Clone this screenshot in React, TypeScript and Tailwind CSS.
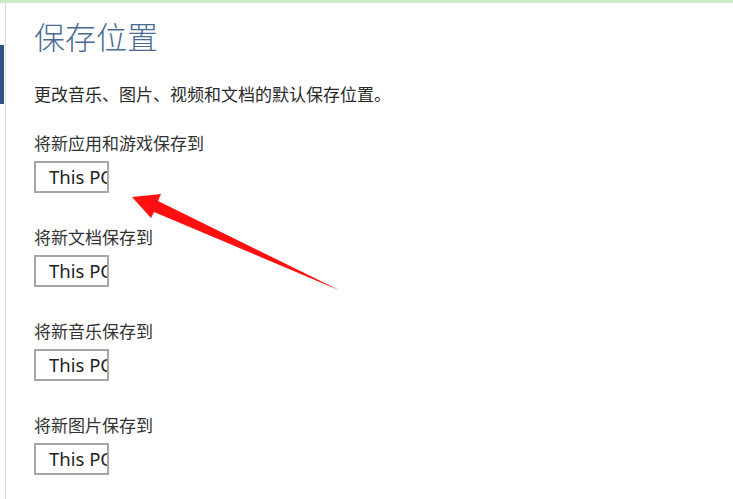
const font = { fontFamily: '"Segoe UI", "Noto Sans", "Noto Sans CJK SC", sans-serif' };

const groups = ["将新应用和游戏保存到", "将新文档保存到", "将新音乐保存到", "将新图片保存到"];

function DriveBox() {
  return (
    <div className="h-[32px] w-[75px] overflow-hidden whitespace-nowrap border-2 border-[#a6a6a6] bg-white pl-[13px] text-[18.5px] leading-[27px] text-[#222]">
      This PC
    </div>
  );
}

export default function App() {
  return (
    <div className="relative h-[499px] w-[733px] overflow-hidden bg-white" style={font}>
      <div className="h-[3px] w-full bg-[#cce8c6]" />
      <div className="flex h-[496px]">
        <div className="flex w-[6px] shrink-0 border-r border-[#dcdcdc]">
          <div className="mt-[42px] h-[59px] w-[4px] bg-[#2f5380]" />
        </div>
        <div className="flex flex-col pl-[28px]">
          <h1 className="mt-[14px] text-[31px] font-light leading-[40px] text-[#4a6b93]">保存位置</h1>
          <p className="mt-[27px] text-[17px] leading-[22px] text-[#2a2a2a]">更改音乐、图片、视频和文档的默认保存位置。</p>
          <div className="mt-[27px] flex flex-col gap-[34px]">
            {groups.map((g) => (
              <div key={g} className="flex flex-col gap-[6px]">
                <span className="text-[17px] leading-[22px] text-[#333]">{g}</span>
                <DriveBox />
              </div>
            ))}
          </div>
        </div>
      </div>
      <svg className="absolute left-0 top-0" width="733" height="499" viewBox="0 0 733 499">
        <polygon points="132,197 161,194 158,201 341,291 154,212 151,218" fill="#ff1010" />
      </svg>
    </div>
  );
}
